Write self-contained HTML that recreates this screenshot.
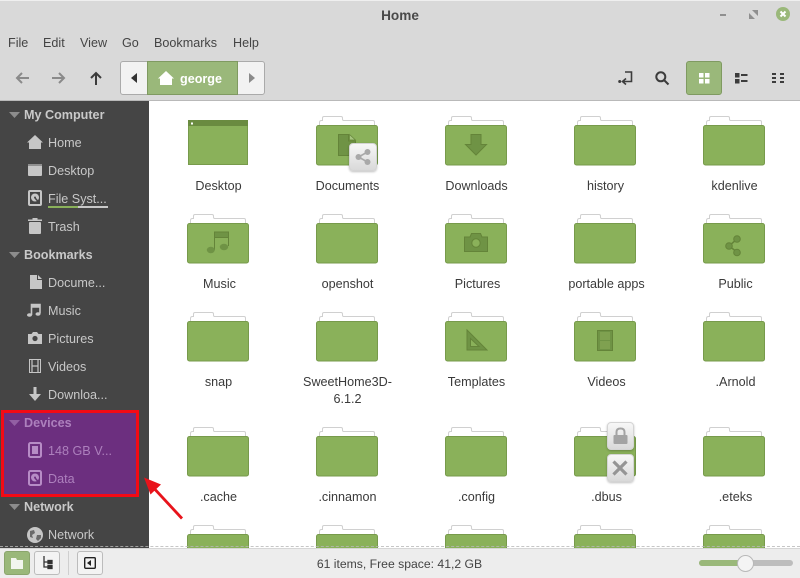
<!DOCTYPE html>
<html><head><meta charset="utf-8"><title>Home</title>
<style>
html,body{margin:0;padding:0;background:#fff}
#w{position:relative;width:800px;height:578px;overflow:hidden;background:#fff;font-family:"Liberation Sans","DejaVu Sans",sans-serif;font-size:12.6px;color:#3f3f3f}
.a{position:absolute}
.t{position:absolute;white-space:nowrap;line-height:16px}
.l{position:absolute;width:129px;text-align:center;line-height:17px;color:#3a3a3a;margin-top:1px}
.s{position:absolute;left:48px;white-space:nowrap;line-height:16px;color:#c8c8c8;margin-top:1px}
.h{position:absolute;left:24px;white-space:nowrap;line-height:16px;color:#c9c9c9;font-weight:bold;margin-top:1px}
.m{position:absolute;top:35px;line-height:16px;color:#444}
svg{position:absolute;overflow:visible}
</style></head>
<body><div id="w">
<svg width="0" height="0" style="position:absolute"><defs>
<g id="f"><path d="M3.5 9V6.5Q3.5 4.5 5.5 4.5H6.5V2Q6.5 .5 8 .5H25Q26.5 .5 26.5 2V3.2Q26.5 4.5 28 4.5H57Q58.5 4.5 58.5 6V9" fill="#fff" stroke="#d0d0d0"/><rect x=".5" y="9.5" width="61" height="39.5" rx="2" fill="#8ab15a" stroke="#779a4b"/></g>
<path id="tri" d="M0 0H11L5.5 6Z"/>
</defs></svg>

<!-- top chrome -->
<div class="a" style="left:0;top:0;width:800px;height:101px;background:#d9d9d9;border-top:1px solid #efefef;box-sizing:border-box;border-bottom:1px solid #b9b9b9"></div>
<div class="t" style="left:0;width:800px;top:8px;text-align:center;font-weight:bold;font-size:13.6px;color:#4a4a4a">Home</div>
<div class="a" style="left:720px;top:14px;width:6px;height:2px;background:#8f8f8f"></div>
<svg style="left:749px;top:10px" width="9" height="9"><path d="M3 0H9V6ZM0 3L6 9H0Z" fill="#8f8f8f"/></svg>
<svg style="left:776px;top:7px" width="14" height="14"><circle cx="7" cy="7" r="7" fill="#9ab87a"/><path d="M4.5 4.5L9.5 9.5M9.500 4.5L4.5 9.500" stroke="#fff" stroke-width="2"/></svg>
<div class="m" style="left:8px">File</div>
<div class="m" style="left:43px">Edit</div>
<div class="m" style="left:80px">View</div>
<div class="m" style="left:122px">Go</div>
<div class="m" style="left:154px">Bookmarks</div>
<div class="m" style="left:233px">Help</div>
<svg style="left:15px;top:71px" width="14" height="14" fill="none" stroke="#8a8a8a" stroke-width="2"><path d="M14 7H2M7 2L2 7L7 12"/></svg>
<svg style="left:52px;top:71px" width="14" height="14" fill="none" stroke="#8a8a8a" stroke-width="2"><path d="M0 7H12M7 2L12 7L7 12"/></svg>
<svg style="left:89px;top:71px" width="14" height="14" fill="none" stroke="#3c3c3c" stroke-width="2"><path d="M7 14V2M2 7L7 2L12 7"/></svg>
<!-- pathbar -->
<div class="a" style="left:120px;top:61px;width:145px;height:34px;box-sizing:border-box;border:1px solid #aaa;border-radius:3px;background:#f2f2f2"></div>
<div class="a" style="left:147px;top:61px;width:91px;height:34px;box-sizing:border-box;background:#9ab87a;border:1px solid #7f9a61"></div>
<svg style="left:131px;top:73px" width="6" height="10"><path d="M6 0V10L0 5Z" fill="#333"/></svg>
<svg style="left:249px;top:73px" width="6" height="10"><path d="M0 0V10L6 5Z" fill="#8a8a8a"/></svg>
<svg style="left:158px;top:71px" width="16" height="14"><path d="M8 0L16 7.5H14V14H2V7.5H0Z" fill="#fff"/></svg>
<div class="t" style="left:180px;top:71px;color:#fff;font-weight:bold;font-size:12.6px">george</div>
<!-- right toolbar -->
<svg style="left:618px;top:71px" width="16" height="14" fill="none" stroke="#3c3c3c" stroke-width="1.6"><path d="M7 1H13.5V10.5H5M8 7.5L4.5 10.5L8 13.5"/><circle cx="1.7" cy="10.5" r="1.5" fill="#3c3c3c" stroke="none"/></svg>
<svg style="left:655px;top:71px" width="14" height="14" fill="none" stroke="#3c3c3c" stroke-width="2"><circle cx="5.8" cy="5.8" r="4.5"/><path d="M9 9L13.5 13.5"/></svg>
<div class="a" style="left:686px;top:61px;width:36px;height:34px;box-sizing:border-box;background:#9ab87a;border:1px solid #7f9a61;border-radius:3px"></div>
<svg style="left:699px;top:73px" width="11" height="11" fill="#fff"><rect width="4.5" height="4.5"/><rect x="6" width="4.5" height="4.5"/><rect y="6" width="4.5" height="4.5"/><rect x="6" y="6" width="4.5" height="4.5"/></svg>
<svg style="left:735px;top:73px" width="13" height="11" fill="#3c3c3c"><rect width="4.5" height="4.5"/><rect y="6" width="4.5" height="4.5"/><rect x="6" y="1" width="6.5" height="2"/><rect x="6" y="7" width="6.5" height="2"/></svg>
<svg style="left:772px;top:73px" width="12" height="11" fill="#3c3c3c"><rect width="4" height="2"/><rect x="8" width="4" height="2"/><rect y="4" width="4" height="2"/><rect x="8" y="4" width="4" height="2"/><rect y="8" width="4" height="2"/><rect x="8" y="8" width="4" height="2"/></svg>

<!-- sidebar -->
<div class="a" style="left:0;top:101px;width:149px;height:447px;background:#454545"></div>
<svg style="left:9px;top:112px" width="11" height="6" fill="#8c8c8c"><use href="#tri"/></svg>
<svg style="left:9px;top:252px" width="11" height="6" fill="#8c8c8c"><use href="#tri"/></svg>
<svg style="left:9px;top:504px" width="11" height="6" fill="#8c8c8c"><use href="#tri"/></svg>
<div class="h" style="top:106px">My Computer</div>
<div class="s" style="top:134px">Home</div>
<div class="s" style="top:162px">Desktop</div>
<div class="s" style="top:190px">File Syst...</div>
<div class="a" style="left:48px;top:206px;width:60px;height:2px;background:#c9c9c9"></div>
<div class="a" style="left:48px;top:206px;width:30px;height:2px;background:#8ab15a"></div>
<div class="s" style="top:218px">Trash</div>
<div class="h" style="top:246px">Bookmarks</div>
<div class="s" style="top:274px">Docume...</div>
<div class="s" style="top:302px">Music</div>
<div class="s" style="top:330px">Pictures</div>
<div class="s" style="top:358px">Videos</div>
<div class="s" style="top:386px">Downloa...</div>
<div class="h" style="top:498px">Network</div>
<div class="s" style="top:526px">Network</div>
<svg style="left:27px;top:135px" width="16" height="14" fill="#c6c6c6"><path d="M8 0L16 7.5H14V14H2V7.5H0Z"/></svg>
<svg style="left:28px;top:164px" width="14" height="12"><rect width="14" height="12" rx="1" fill="#c6c6c6"/><rect width="14" height="2" fill="#8f8f8f"/></svg>
<svg style="left:28px;top:190px" width="14" height="16"><rect x="1" y="1" width="12" height="14" rx="1" fill="none" stroke="#c6c6c6" stroke-width="2"/><circle cx="7" cy="7.5" r="4" fill="#c6c6c6"/><circle cx="7" cy="7.5" r="1" fill="#454545"/><path d="M7 8L11 12.5" stroke="#454545" stroke-width="1.5"/></svg>
<svg style="left:28px;top:218px" width="14" height="16" fill="#c6c6c6"><rect x="1" y="4" width="12" height="12" rx="1"/><rect y="1.5" width="14" height="1.5"/><rect x="4.5" y="0" width="5" height="2"/></svg>
<svg style="left:30px;top:275px" width="12" height="14" fill="#c6c6c6"><path d="M0 0H7V5H12V14H0ZM8 0L12 4H8Z"/></svg>
<svg style="left:27px;top:303px" width="14" height="14"><path d="M4.5 12V1.5H13V10.5M4.5 4H13" fill="none" stroke="#c6c6c6" stroke-width="1.6"/><path d="M4.5 1H13V4H4.5Z" fill="#c6c6c6"/><ellipse cx="2.5" cy="12" rx="2.5" ry="1.8" fill="#c6c6c6"/><ellipse cx="11" cy="11" rx="2.5" ry="1.8" fill="#c6c6c6"/></svg>
<svg style="left:28px;top:332px" width="14" height="12"><path d="M0 2H3.5L5 0H9L10.5 2H14V12H0Z" fill="#c6c6c6"/><circle cx="7" cy="6.5" r="2.6" fill="#454545"/></svg>
<svg style="left:29px;top:359px" width="12" height="14" fill="none" stroke="#c6c6c6"><rect x=".5" y=".5" width="11" height="13"/><path d="M3 0.5V13.5M9 .5V13.5M3 7H9" stroke-width="1.2"/></svg>
<svg style="left:29px;top:387px" width="12" height="14" fill="none" stroke="#c6c6c6" stroke-width="3"><path d="M6 0V8"/><path d="M0 7H12L6 14Z" fill="#c6c6c6" stroke="none"/></svg>
<svg style="left:27px;top:527px" width="16" height="16"><circle cx="8" cy="8" r="8" fill="#c6c6c6"/><path d="M3 4L7 3L8 6L5 8L6 11L3 10ZM10 8H14V11L11 14L9 12Z" fill="#6a6a6a"/></svg>

<!-- devices highlight -->
<div class="a" style="left:1px;top:410px;width:138px;height:87px;box-sizing:border-box;border:3px solid #f40a15;background:#6c2f7f"></div>
<svg style="left:9px;top:420px" width="11" height="6" fill="#925fa3"><use href="#tri"/></svg>
<div class="h" style="top:414px;color:#ad80bd">Devices</div>
<div class="s" style="top:442px;color:#ad80bd">148 GB V...</div>
<div class="s" style="top:470px;color:#ad80bd">Data</div>
<svg style="left:28px;top:442px" width="14" height="16"><rect x="1" y="1" width="12" height="14" rx="1.5" fill="none" stroke="#b78cc6" stroke-width="2"/><rect x="4" y="4" width="6" height="8" fill="#b78cc6"/></svg>
<svg style="left:28px;top:470px" width="14" height="16"><rect x="1" y="1" width="12" height="14" rx="1.5" fill="none" stroke="#b78cc6" stroke-width="2"/><circle cx="7" cy="7.5" r="4" fill="#b78cc6"/><circle cx="7" cy="7.5" r="1" fill="#6c2f7f"/><path d="M7 8L11 12.5" stroke="#6c2f7f" stroke-width="1.5"/></svg>

<!-- row 1 -->
<svg style="left:188px;top:120px" width="60" height="45"><rect x=".5" y=".5" width="59" height="44" fill="#8ab15a" stroke="#779a4b"/><rect width="60" height="6" fill="#6a8b40"/><rect x="3" y="2.5" width="2" height="2" fill="#fff"/></svg>
<svg style="left:316px;top:116px" width="62" height="50"><use href="#f"/></svg>
<svg style="left:445px;top:116px" width="62" height="50"><use href="#f"/></svg>
<svg style="left:574px;top:116px" width="62" height="50"><use href="#f"/></svg>
<svg style="left:703px;top:116px" width="62" height="50"><use href="#f"/></svg>
<svg style="left:338px;top:134px" width="18" height="22"><path d="M.5 .5H10.5V7H17.5V21.5H.5Z" fill="#6f9345" stroke="#648439"/><path d="M11.5 .5L17.5 6H11.5Z" fill="#a5c47f" stroke="#648439" stroke-width=".7"/></svg>
<svg style="left:465px;top:134px" width="22" height="22"><path d="M6 .5H16V10.5H21.5L11 21L.5 10.5H6Z" fill="#6f9345" stroke="#648439"/></svg>
<div class="a" style="left:349px;top:143px;width:28px;height:28px;box-sizing:border-box;border:1px solid #d4d4d4;border-radius:4px;background:linear-gradient(#f7f7f7,#d9d9d9);box-shadow:0 1px 2px rgba(0,0,0,.25)"></div>
<svg style="left:355px;top:149px" width="16" height="16"><path d="M12.5 3L3.5 8L12.5 13" fill="none" stroke="#a9a9a9" stroke-width="1.6"/><circle cx="12.5" cy="3" r="3" fill="#a9a9a9"/><circle cx="3.5" cy="8" r="3" fill="#a9a9a9"/><circle cx="12.5" cy="13" r="3" fill="#a9a9a9"/></svg>
<div class="l" style="left:154px;top:177px">Desktop</div>
<div class="l" style="left:283px;top:177px">Documents</div>
<div class="l" style="left:412px;top:177px">Downloads</div>
<div class="l" style="left:541px;top:177px">history</div>
<div class="l" style="left:670px;top:177px">kdenlive</div>

<!-- row 2 -->
<svg style="left:187px;top:214px" width="62" height="50"><use href="#f"/></svg>
<svg style="left:316px;top:214px" width="62" height="50"><use href="#f"/></svg>
<svg style="left:445px;top:214px" width="62" height="50"><use href="#f"/></svg>
<svg style="left:574px;top:214px" width="62" height="50"><use href="#f"/></svg>
<svg style="left:703px;top:214px" width="62" height="50"><use href="#f"/></svg>
<svg style="left:206px;top:231px" width="24" height="23"><path d="M8.5 19V1H22.5V15" fill="none" stroke="#648439"/><rect x="8.5" y="1" width="14" height="5.5" fill="#6f9345" stroke="#648439"/><ellipse cx="4.8" cy="19" rx="4" ry="3.2" fill="#6f9345"/><ellipse cx="18" cy="16" rx="4.2" ry="3.2" fill="#6f9345"/></svg>
<svg style="left:464px;top:233px" width="24" height="19"><path d="M.5 4H6L7.5 .5H16.5L18 4H23.5V18.5H.5Z" fill="#6f9345" stroke="#648439"/><circle cx="12" cy="10" r="4.2" fill="#8ab15a" stroke="#648439"/></svg>
<svg style="left:725px;top:235px" width="18" height="21"><path d="M12 4L4 11L12 17" fill="none" stroke="#648439" stroke-width="1.5"/><circle cx="12" cy="4" r="3.3" fill="#6f9345" stroke="#648439"/><circle cx="4" cy="11" r="3.3" fill="#6f9345" stroke="#648439"/><circle cx="12" cy="17.5" r="3.3" fill="#6f9345" stroke="#648439"/></svg>
<div class="l" style="left:155px;top:275px">Music</div>
<div class="l" style="left:283px;top:275px">openshot</div>
<div class="l" style="left:413px;top:275px">Pictures</div>
<div class="l" style="left:542px;top:275px">portable apps</div>
<div class="l" style="left:671px;top:275px">Public</div>

<!-- row 3 -->
<svg style="left:187px;top:312px" width="62" height="50"><use href="#f"/></svg>
<svg style="left:316px;top:312px" width="62" height="50"><use href="#f"/></svg>
<svg style="left:445px;top:312px" width="62" height="50"><use href="#f"/></svg>
<svg style="left:574px;top:312px" width="62" height="50"><use href="#f"/></svg>
<svg style="left:703px;top:312px" width="62" height="50"><use href="#f"/></svg>
<svg style="left:466px;top:329px" width="22" height="22"><path d="M1 1V21H21Z M4.5 9.5V17.5H13Z" fill="#6f9345" fill-rule="evenodd" stroke="#648439"/></svg>
<svg style="left:597px;top:330px" width="16" height="21"><rect x=".5" y=".5" width="15" height="20" fill="#6f9345" stroke="#648439"/><rect x="3" y="2" width="10" height="8" fill="#7fa150"/><rect x="3" y="11" width="10" height="8" fill="#7fa150"/></svg>
<div class="l" style="left:154px;top:373px">snap</div>
<div class="l" style="left:283px;top:373px;">SweetHome3D-<br>6.1.2</div>
<div class="l" style="left:412px;top:373px">Templates</div>
<div class="l" style="left:542px;top:373px">Videos</div>
<div class="l" style="left:671px;top:373px">.Arnold</div>

<!-- row 4 -->
<svg style="left:187px;top:427px" width="62" height="50"><use href="#f"/></svg>
<svg style="left:316px;top:427px" width="62" height="50"><use href="#f"/></svg>
<svg style="left:445px;top:427px" width="62" height="50"><use href="#f"/></svg>
<svg style="left:574px;top:427px" width="62" height="50"><use href="#f"/></svg>
<svg style="left:703px;top:427px" width="62" height="50"><use href="#f"/></svg>
<div class="a" style="left:607px;top:422px;width:27px;height:28px;box-sizing:border-box;border:1px solid #d4d4d4;border-radius:4px;background:linear-gradient(#f7f7f7,#d9d9d9);box-shadow:0 1px 2px rgba(0,0,0,.25)"></div>
<svg style="left:613px;top:427px" width="15" height="17"><path d="M3.5 8V5Q3.5 1.5 7.5 1.5T11.5 5V8" fill="none" stroke="#a3a3a3" stroke-width="2"/><rect x=".5" y="8" width="14" height="9" rx="1" fill="#a3a3a3"/></svg>
<div class="a" style="left:607px;top:454px;width:27px;height:28px;box-sizing:border-box;border:1px solid #d4d4d4;border-radius:4px;background:linear-gradient(#f7f7f7,#d9d9d9);box-shadow:0 1px 2px rgba(0,0,0,.25)"></div>
<svg style="left:612px;top:460px" width="16" height="16"><path d="M1.5 1.5L14.5 14.5M14.5 1.5L1.5 14.5" stroke="#959595" stroke-width="3.2"/></svg>
<div class="l" style="left:154px;top:488px">.cache</div>
<div class="l" style="left:283px;top:488px">.cinnamon</div>
<div class="l" style="left:412px;top:488px">.config</div>
<div class="l" style="left:542px;top:488px">.dbus</div>
<div class="l" style="left:671px;top:488px">.eteks</div>

<!-- row 5 -->
<svg style="left:187px;top:525px" width="62" height="50"><use href="#f"/></svg>
<svg style="left:316px;top:525px" width="62" height="50"><use href="#f"/></svg>
<svg style="left:445px;top:525px" width="62" height="50"><use href="#f"/></svg>
<svg style="left:574px;top:525px" width="62" height="50"><use href="#f"/></svg>
<svg style="left:703px;top:525px" width="62" height="50"><use href="#f"/></svg>

<!-- statusbar -->
<div class="a" style="left:0;top:546px;width:800px;height:0;border-top:1px dashed #b8b8b8;opacity:.8"></div>
<div class="a" style="left:0;top:548px;width:800px;height:30px;background:#ededed;border-top:1px solid #d6d6d6;box-sizing:border-box"></div>
<div class="a" style="left:4px;top:551px;width:26px;height:24px;box-sizing:border-box;background:#9ab87a;border:1px solid #8aa56c;border-radius:3px"></div>
<svg style="left:11px;top:557px" width="12" height="12"><path d="M0 1H5L6 3H12V12H0Z" fill="#f2f5ee"/></svg>
<div class="a" style="left:34px;top:551px;width:26px;height:24px;box-sizing:border-box;background:#f3f3f3;border:1px solid #bcbcbc;border-radius:3px"></div>
<svg style="left:42px;top:556px" width="11" height="14" fill="none" stroke="#333" stroke-width="1.3"><path d="M2 0V11H10M2 6H10"/><rect x="6" y="4.5" width="4" height="3" fill="#333"/><rect x="6" y="9.5" width="4" height="3" fill="#333"/></svg>
<div class="a" style="left:68px;top:551px;width:1px;height:24px;background:#cfcfcf"></div>
<div class="a" style="left:77px;top:551px;width:26px;height:24px;box-sizing:border-box;background:#f3f3f3;border:1px solid #bcbcbc;border-radius:3px"></div>
<svg style="left:84px;top:557px" width="12" height="12"><rect x=".7" y=".7" width="10.6" height="10.6" rx="1" fill="none" stroke="#222" stroke-width="1.4"/><path d="M7 3V9L3 6Z" fill="#222"/></svg>
<div class="t" style="left:0;width:799px;top:556px;text-align:center;color:#444;font-size:12.2px">61 items, Free space: 41,2 GB</div>
<div class="a" style="left:699px;top:560px;width:94px;height:6px;border-radius:3px;background:#bdbdbd"></div>
<div class="a" style="left:699px;top:560px;width:46px;height:6px;border-radius:3px 0 0 3px;background:#9ab87a"></div>
<div class="a" style="left:737px;top:555px;width:17px;height:17px;box-sizing:border-box;border-radius:50%;background:#f4f4f4;border:1px solid #b8b8b8"></div>

<!-- red arrow -->
<svg style="left:140px;top:474px" width="48" height="52"><path d="M42 44.5L10 10" stroke="#e8131b" stroke-width="2.8" fill="none"/><path d="M4 3.5L21 10.5L10.5 20.5Z" fill="#e8131b"/></svg>
</div></body></html>
